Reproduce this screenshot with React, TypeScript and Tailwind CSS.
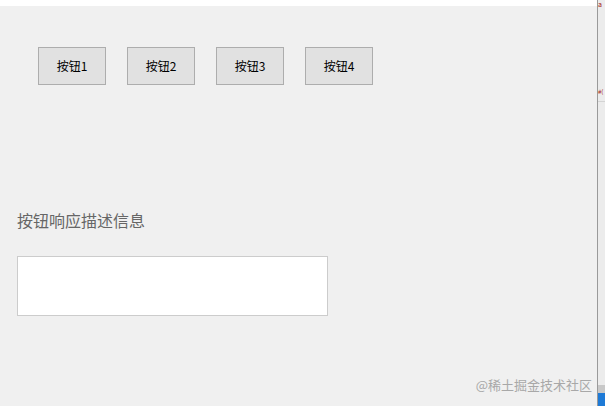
import React from 'react';

const buttons = ['按钮1', '按钮2', '按钮3', '按钮4'];

const App: React.FC = () => {
  return (
    <div
      className="w-[605px] h-[406px] flex bg-white overflow-hidden"
      style={{ fontFamily: "'Noto Sans CJK SC', 'Noto Sans', sans-serif" }}
    >
      {/* ── Form window ── */}
      <div className="w-[597px] flex flex-col">
        <div className="h-[6px] bg-white" />
        <div className="flex-1 bg-[#f0f0f0] relative">
          <div className="flex gap-[21px] pl-[38px] pt-[41px]">
            {buttons.map((b) => (
              <button
                key={b}
                className="w-[68px] h-[38px] bg-[#e1e1e1] border border-[#adadad] text-[12px] text-black leading-none"
              >
                {b}
              </button>
            ))}
          </div>
          <p className="mt-[125px] ml-[17px] text-[16px] leading-[20px] text-[#666]">按钮响应描述信息</p>
          <div className="mt-[26px] ml-[17px] w-[311px] h-[60px] bg-white border border-[#cccccc]" />
          <span className="absolute right-[5px] bottom-[13px] text-[13px] leading-[16px] text-[#a8a8a8]">
            @稀土掘金技术社区
          </span>
        </div>
      </div>

      {/* ── Editor edge ── */}
      <div className="w-[8px] flex flex-col border-l border-[#9a9a9a] bg-[#ececec]">
        <span className="pt-[1px] text-[7px] leading-[7px] text-[#a31515]">a</span>
        <div className="h-[78px]" />
        <span className="text-[6px] leading-[12px] text-[#a31515] whitespace-nowrap">#(</span>
        <div className="h-px bg-[#d4d4d4] mt-[3px]" />
        <div className="flex-1" />
        <div className="h-[8px] bg-[#c8c8c8]" />
        <div className="h-[13px] bg-[#1e7ad6]" />
      </div>
    </div>
  );
};

export default App;
